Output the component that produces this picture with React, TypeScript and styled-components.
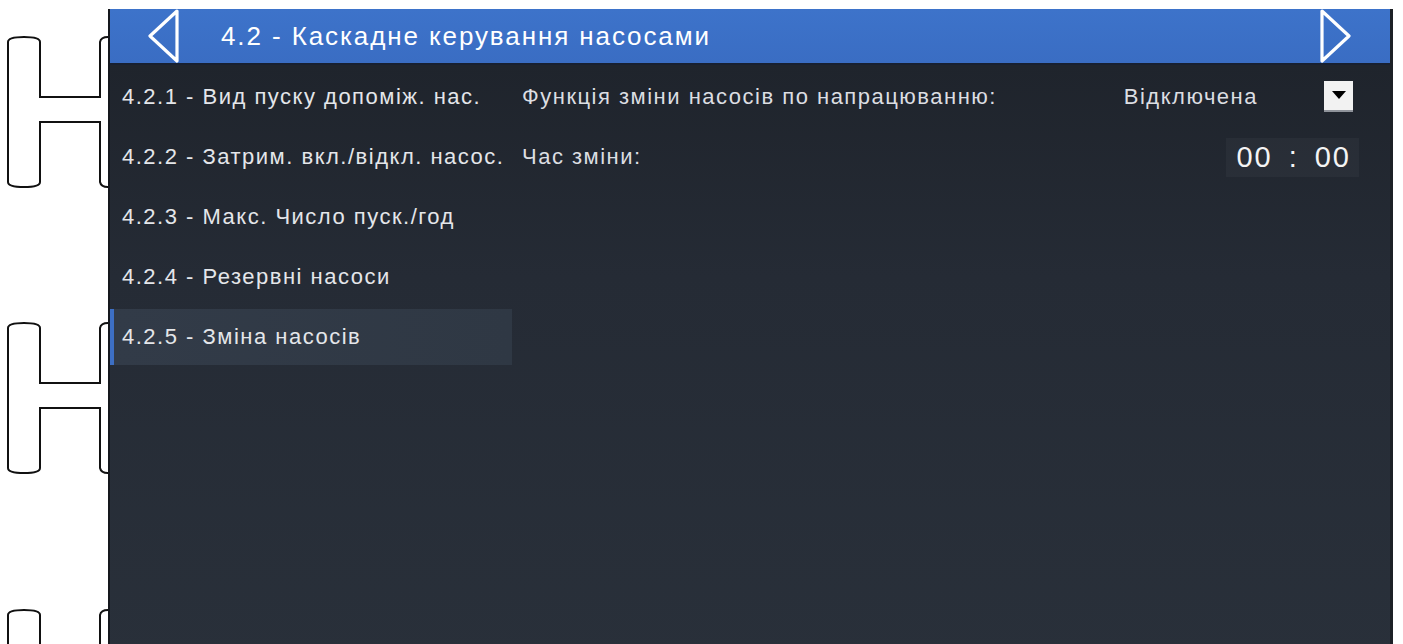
import React from "react";
import styled, { createGlobalStyle } from "styled-components";

const GlobalStyle = createGlobalStyle`
  html, body {
    margin: 0;
    padding: 0;
    background: #ffffff;
    overflow: hidden;
  }
  body {
    font-family: "Liberation Sans", Arial, sans-serif;
  }
`;

const Page = styled.div`
  display: flex;
  width: 1403px;
  height: 644px;
  overflow: hidden;
  background: #ffffff;
`;

const BinderStrip = styled.div`
  flex: 0 0 108px;
  height: 644px;
`;

const Screen = styled.div`
  flex: 0 0 1285px;
  margin-top: 9px;
  height: 660px;
  display: flex;
  flex-direction: column;
  background: #1b1f26;
  border-left: 2px solid #15181d;
  border-right: 3px solid #1c2026;
  box-sizing: border-box;
`;

const Header = styled.div`
  flex: 0 0 56px;
  box-sizing: border-box;
  display: flex;
  align-items: center;
  background: linear-gradient(#3d73ca, #3a6dc3);
  border-bottom: 2px solid #182030;
  color: #ffffff;
`;

const NavButton = styled.button<{ $side: "left" | "right" }>`
  flex: 0 0 auto;
  width: 34px;
  height: 54px;
  padding: 0;
  border: none;
  background: transparent;
  margin-left: ${(p) => (p.$side === "left" ? "37px" : "0")};
  margin-right: ${(p) => (p.$side === "right" ? "38px" : "0")};
  display: flex;
  align-items: center;
  justify-content: center;
`;

const Title = styled.div`
  flex: 1 1 auto;
  margin-left: 40px;
  font-size: 26px;
  letter-spacing: 1.9px;
  color: #ffffff;
`;

const Body = styled.div`
  flex: 1 1 auto;
  display: flex;
  background: linear-gradient(180deg, #1f242c 0%, #252b35 35%, #29303a 100%);
`;

const Menu = styled.div`
  flex: 0 0 402px;
  display: flex;
  flex-direction: column;
  gap: 4px;
  padding-top: 4px;
`;

const MenuItem = styled.div<{ $active?: boolean }>`
  height: 56px;
  display: flex;
  align-items: center;
  padding-left: 8px;
  border-left: 4px solid ${(p) => (p.$active ? "#3d6fc4" : "transparent")};
  background: ${(p) =>
    p.$active ? "linear-gradient(90deg, #323b48, #2f3844)" : "transparent"};
  color: #e4e6ea;
  font-size: 22px;
  letter-spacing: 1.5px;
  white-space: nowrap;
`;

const Content = styled.div`
  flex: 1 1 auto;
  display: flex;
  flex-direction: column;
  gap: 4px;
  padding: 4px 37px 0 10px;
`;

const Row = styled.div`
  height: 56px;
  display: flex;
  align-items: center;
  justify-content: space-between;
  color: #dcdee2;
  font-size: 22px;
  letter-spacing: 1.5px;
  white-space: nowrap;
`;

const Select = styled.div`
  display: flex;
  align-items: center;
  gap: 66px;
`;

const SelectValue = styled.span`
  color: #dcdee2;
`;

const ArrowBox = styled.div`
  width: 29px;
  height: 29px;
  margin-bottom: 4px;
  background: #f2f2f2;
  box-shadow: 0 2px 0 #8f939a;
  display: flex;
  align-items: center;
  justify-content: center;
`;

const TimeField = styled.div`
  display: flex;
  align-items: center;
  gap: 16px;
  padding: 3px 8px 3px 10px;
  margin-right: -6px;
  background: rgba(255, 255, 255, 0.035);
  color: #f4f4f4;
  font-size: 29px;
  letter-spacing: 2px;
`;

const Binder = () => {
  const ring = (y: number) =>
    `M108 ${y} Q101 ${y} 100 ${y + 5} V${y + 60} H40 V${y + 5} Q40 ${y} 24 ${y} Q8 ${y} 8 ${y + 5} ` +
    `V${y + 145} Q8 ${y + 150} 24 ${y + 150} Q40 ${y + 150} 40 ${y + 145} V${y + 85} H100 V${y + 145} Q101 ${y + 150} 108 ${y + 150}`;
  return (
    <svg width="108" height="644" viewBox="0 0 108 644">
      {[37, 323, 610].map((y) => (
        <path key={y} d={ring(y)} fill="none" stroke="#111" strokeWidth="2" />
      ))}
    </svg>
  );
};

const Triangle = ({ dir }: { dir: "left" | "right" }) => (
  <svg width="34" height="54" viewBox="0 0 34 54">
    {dir === "left" ? (
      <path d="M30 2 L3 27 L30 52 Z" fill="none" stroke="#ffffff" strokeWidth="3.2" strokeLinejoin="round" />
    ) : (
      <path d="M4 2 L31 27 L4 52 Z" fill="none" stroke="#ffffff" strokeWidth="3.2" strokeLinejoin="round" />
    )}
  </svg>
);

const menu = [
  "4.2.1 - Вид пуску допоміж. нас.",
  "4.2.2 - Затрим. вкл./відкл. насос.",
  "4.2.3 - Макс. Число пуск./год",
  "4.2.4 - Резервні насоси",
  "4.2.5 - Зміна насосів",
];

export default function App() {
  return (
    <>
      <GlobalStyle />
      <Page>
        <BinderStrip>
          <Binder />
        </BinderStrip>
        <Screen>
          <Header>
            <NavButton $side="left">
              <Triangle dir="left" />
            </NavButton>
            <Title>4.2 - Каскадне керування насосами</Title>
            <NavButton $side="right">
              <Triangle dir="right" />
            </NavButton>
          </Header>
          <Body>
            <Menu>
              {menu.map((m, i) => (
                <MenuItem key={m} $active={i === 4}>
                  {m}
                </MenuItem>
              ))}
            </Menu>
            <Content>
              <Row>
                <span>Функція зміни насосів по напрацюванню:</span>
                <Select>
                  <SelectValue>Відключена</SelectValue>
                  <ArrowBox>
                    <svg width="14" height="8" viewBox="0 0 14 8">
                      <path d="M0 0 H14 L7 8 Z" fill="#000" />
                    </svg>
                  </ArrowBox>
                </Select>
              </Row>
              <Row>
                <span>Час зміни:</span>
                <TimeField>
                  <span>00</span>
                  <span>:</span>
                  <span>00</span>
                </TimeField>
              </Row>
            </Content>
          </Body>
        </Screen>
      </Page>
    </>
  );
}
